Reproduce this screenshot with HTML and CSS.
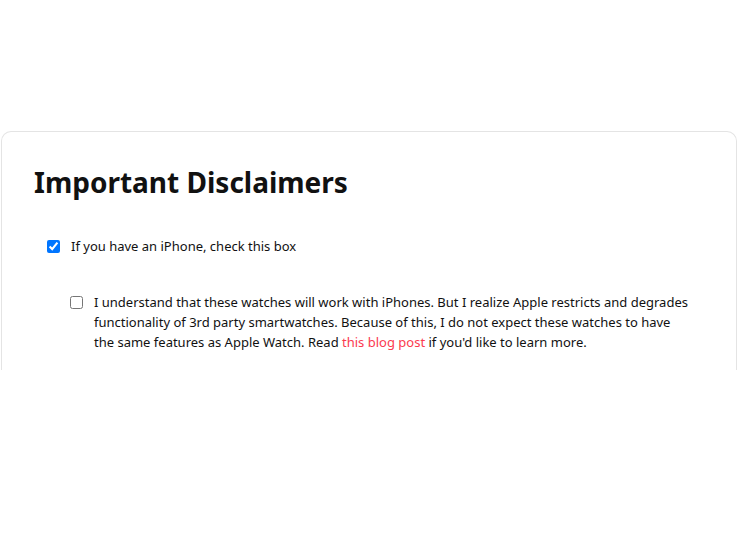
FILE: index.html
```html
<!DOCTYPE html>
<html lang="en">
<head>
  <meta charset="UTF-8" />
  <meta name="viewport" content="width=device-width, initial-scale=1" />
  <title>Important Disclaimers</title>
  <link rel="stylesheet" href="styles.css">
</head>
<body>
  <div class="page">
    <div class="card">
      <h1>Important Disclaimers</h1>
      <label class="check">
        <input type="checkbox" id="hasIphone" checked />
        <span>If you have an iPhone, check this box</span>
      </label>
      <label class="check nested">
        <input type="checkbox" id="understand" />
        <span>I understand that these watches will work with iPhones. But I realize Apple restricts and degrades functionality of 3rd party smartwatches. Because of this, I do not expect these watches to have the same features as Apple Watch. Read <a href="#">this blog post</a> if you'd like to learn more.</span>
      </label>
    </div>
  </div>
</body>
</html>
```

FILE: styles.css
```css
body {
  margin: 0;
  font-family: 'Noto Sans', sans-serif;
  color: #111;
  background: white;
}

.page {
  padding: 131px 4px 0 1px;
}

.card {
  height: 239px;
  border: 1px solid #e4e4e4;
  border-bottom: none;
  border-radius: 10px 10px 0 0;
  padding: 0 46px 0 32px;
  box-sizing: border-box;
}

h1 {
  margin: 30px 0 0 0;
  font-size: 28px;
  font-weight: bold;
  line-height: 40px;
}

.check {
  display: flex;
  align-items: flex-start;
  gap: 11px;
  font-size: 13px;
  line-height: 20px;
  margin-left: 13px;
}

.check input {
  width: 13px;
  height: 13px;
  margin: 4px 0 0 0;
  flex-shrink: 0;
}

.check:first-of-type {
  margin-top: 34px;
}

.nested {
  margin-top: 36px;
  margin-left: 36px;
}

.check a {
  color: #fb3a4f;
  text-decoration: none;
}
```
